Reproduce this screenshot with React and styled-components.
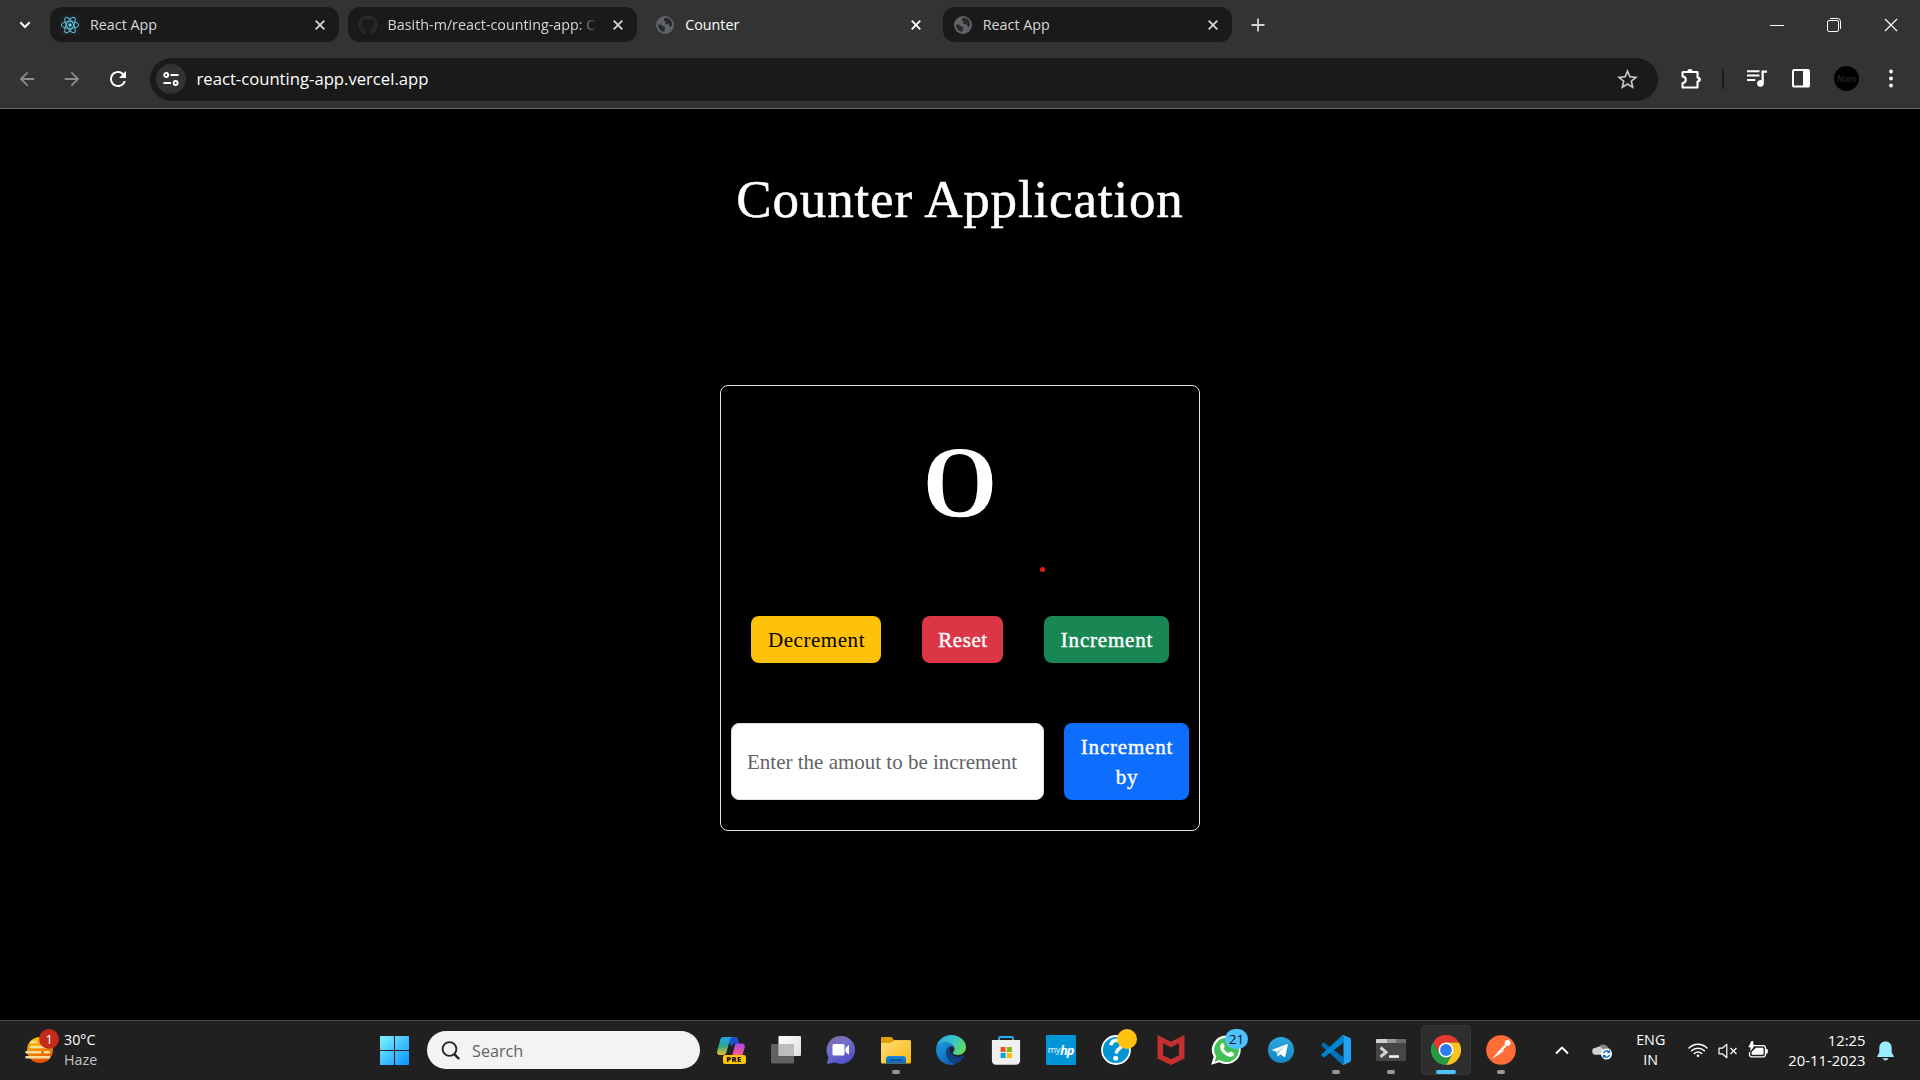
import React from "react";
import styled, { createGlobalStyle, css } from "styled-components";
import { FaGithub } from "react-icons/fa";
import { MdArrowBack, MdArrowForward, MdRefresh, MdStarOutline } from "react-icons/md";

const GlobalStyle = createGlobalStyle`
  * { box-sizing: border-box; }
  html, body { margin: 0; padding: 0; background: #000; }
  body { overflow: hidden; }
  svg { display: block; flex: none; }
`;

const uiFont = `"Segoe UI", "Open Sans", "Noto Sans", sans-serif`;
const pageFont = `Georgia, "Liberation Serif", serif`;

const Screen = styled.div`
  width: 1920px;
  height: 1080px;
  display: flex;
  flex-direction: column;
  background: #000;
  font-family: ${uiFont};
  overflow: hidden;
`;

/* ---------- Browser chrome ---------- */

const Browser = styled.header`
  height: 109px;
  flex: none;
  background: #333;
  border-bottom: 1px solid #6a6a6a;
`;

const TabStrip = styled.div`
  height: 49px;
  display: flex;
  align-items: center;
`;

const TabSearch = styled.div`
  width: 50px;
  display: flex;
  justify-content: center;
`;

const Tabs = styled.div`
  display: flex;
  gap: 8.2px;
`;

const Tab = styled.div`
  width: 289.4px;
  height: 35px;
  padding: 0 14px 0 10px;
  display: flex;
  align-items: center;
  border-radius: 12px;
  background: ${(p) => (p.$active ? "transparent" : "#1a1a1a")};
  color: ${(p) => (p.$active ? "#fff" : "#d6d6d6")};
`;

const TabTitle = styled.span`
  flex: 1;
  margin: 1px 10px 0 10px;
  font-size: 14.3px;
  line-height: 20px;
  white-space: nowrap;
  ${(p) =>
    p.$fade &&
    css`
      mask-image: linear-gradient(to right, #000 88%, transparent 98%);
    `}
`;

const NewTab = styled.div`
  margin-left: 19px;
  width: 15px;
`;

const WindowButtons = styled.div`
  margin-left: auto;
  padding-right: 22px;
  display: flex;
  align-items: center;
  gap: 43px;
`;

const Toolbar = styled.div`
  height: 59px;
  display: flex;
  align-items: center;
  color: #fff;
`;

const NavButtons = styled.div`
  width: 150px;
  padding-left: 16px;
  display: flex;
  align-items: center;
  gap: 23px;
  color: #8b8b8b;
`;

const AddressBar = styled.div`
  width: 1508px;
  height: 43px;
  margin-top: 1px;
  padding: 0 18px 0 6px;
  border-radius: 22px;
  background: #1a1a1a;
  display: flex;
  align-items: center;
`;

const SiteInfo = styled.div`
  width: 30px;
  height: 30px;
  border-radius: 50%;
  background: #333;
  display: grid;
  place-items: center;
`;

const Url = styled.span`
  flex: 1;
  padding-left: 10.5px;
  font-size: 16.66px;
  line-height: 24px;
`;

const ToolbarActions = styled.div`
  flex: 1;
  display: flex;
  align-items: center;
  padding-left: 22px;
`;

const Divider = styled.div`
  width: 2px;
  height: 20px;
  margin: 0 23px 0 20px;
  background: #1a1a1a;
`;

const Avatar = styled.div`
  width: 25px;
  height: 25px;
  margin: 0 30px 0 24px;
  border-radius: 50%;
  background: #000;
  display: grid;
  place-items: center;
  color: #333;
  font: italic 9px ${uiFont};
`;

/* ---------- Page ---------- */

const Page = styled.main`
  height: 911px;
  flex: none;
  display: flex;
  flex-direction: column;
  align-items: center;
  font-family: ${pageFont};
`;

const Title = styled.h1`
  margin: 57px 0 0;
  height: 66px;
  line-height: 66px;
  color: #fff;
  font-size: 53px;
  font-weight: 400;
  letter-spacing: 0.85px;
  -webkit-text-stroke: 0.5px #fff;
`;

const Card = styled.section`
  position: relative;
  width: 480px;
  height: 446px;
  margin-top: 153px;
  border: 1px solid #dee2e6;
  border-radius: 8px;
  display: flex;
  flex-direction: column;
`;

const Count = styled.div`
  height: 230px;
  padding-top: 36px;
  text-align: center;
  color: #fff;
  font-size: 100px;
  line-height: 120px;
  transform: scaleX(1.49);
  -webkit-text-stroke: 1px #fff;
`;

const PointerDot = styled.span`
  position: absolute;
  left: 319px;
  top: 181px;
  width: 5px;
  height: 5px;
  border-radius: 50%;
  background: #f01818;
`;

const Actions = styled.div`
  display: flex;
  gap: 41px;
  padding: 0 30px;
`;

const Button = styled.button`
  width: ${(p) => p.$width}px;
  height: ${(p) => p.$height || 47}px;
  padding: 1px 0 0 1px;
  border: 0;
  border-radius: 8px;
  background: ${(p) => p.$bg};
  color: ${(p) => p.$color || "#fff"};
  font-family: ${pageFont};
  font-size: 21px;
  line-height: 30px;
  letter-spacing: ${(p) => p.$spacing || 0.55}px;
  -webkit-text-stroke: ${(p) => (p.$color ? 0 : 0.4)}px currentColor;
`;

const AmountRow = styled.div`
  margin-top: 60px;
  padding: 0 10px;
  display: flex;
  gap: 20px;
`;

const AmountInput = styled.input`
  width: 313px;
  height: 77px;
  padding: 1px 15px 0;
  border: 1px solid #dee2e6;
  border-radius: 8px;
  background: #fff;
  font-family: ${pageFont};
  font-size: 21px;
  outline: none;
  &::placeholder {
    color: #5f6468;
    opacity: 1;
  }
`;

/* ---------- Taskbar ---------- */

const Taskbar = styled.footer`
  height: 60px;
  flex: none;
  display: flex;
  align-items: stretch;
  background: #202020;
  border-top: 1px solid #4a4a4a;
  color: #fff;
`;

const Weather = styled.div`
  width: 380px;
  display: flex;
  align-items: center;
  padding-left: 25px;
`;

const WeatherIcon = styled.div`
  position: relative;
  width: 30px;
  margin-right: 9px;
`;

const Badge = styled.span`
  position: absolute;
  left: ${(p) => p.$x}px;
  top: ${(p) => p.$y}px;
  min-width: 20px;
  height: 20px;
  width: ${(p) => p.$w || 20}px;
  border-radius: 10px;
  display: grid;
  place-items: center;
  background: ${(p) => p.$bg};
  color: ${(p) => p.$color || "#fff"};
  font-size: 13.5px;
  line-height: 20px;
`;

const TwoLines = styled.div`
  display: flex;
  flex-direction: column;
  margin-top: -2px;
  font-size: ${(p) => p.$size || 14.3}px;
  line-height: 20px;
  text-align: ${(p) => p.$align || "left"};
`;

const Muted = styled.span`
  color: #c4c4c4;
`;

const StartButton = styled.div`
  width: 47px;
  display: flex;
  align-items: center;
`;

const SearchBox = styled.div`
  width: 273px;
  height: 38px;
  margin: 10px 3px 0 0;
  padding: 1px 0 0 14px;
  border-radius: 19px;
  background: #f3f3f3;
  color: #626262;
  display: flex;
  align-items: center;
  gap: 12px;
  font-size: 16.2px;
`;

const Apps = styled.div`
  display: flex;
`;

const AppSlot = styled.div`
  position: relative;
  width: 55px;
  padding: 4px 2.5px 5px;
  display: flex;
`;

const AppFace = styled.div`
  flex: 1;
  display: grid;
  place-items: center;
  border-radius: 5px;
  background: ${(p) => (p.$active ? "#2e2e2e" : "transparent")};
  box-shadow: ${(p) => (p.$active ? "inset 0 0 0 1px #383838" : "none")};
`;

const Indicator = styled.span`
  position: absolute;
  left: 50%;
  bottom: 6px;
  width: ${(p) => (p.$active ? 20 : 8)}px;
  height: 4px;
  border-radius: 2px;
  transform: translateX(-50%);
  background: ${(p) => (p.$active ? "#4cc2ff" : "#9a9a9a")};
`;

const HpTile = styled.div`
  width: 30px;
  height: 30px;
  border-radius: 1px;
  background: #0096d6;
  display: flex;
  align-items: center;
  justify-content: center;
  color: #fff;
  font-size: 9px;
  line-height: 30px;
  letter-spacing: -0.3px;
`;

const HpMark = styled.b`
  font-size: 13px;
  font-style: italic;
  letter-spacing: -1.2px;
`;

const CopilotIcon = styled.div`
  position: relative;
  width: 30px;
  height: 30px;
`;

const PreLabel = styled.span`
  position: absolute;
  left: 7px;
  top: 20px;
  width: 23px;
  height: 9px;
  border-radius: 2px;
  background: #ffc40c;
  color: #111;
  text-align: center;
  font-size: 7.5px;
  font-weight: 800;
  letter-spacing: 0.5px;
  line-height: 9px;
`;

const Tray = styled.div`
  margin-left: auto;
  display: flex;
  align-items: center;
`;

const TrayItem = styled.div`
  margin-left: ${(p) => p.$gap}px;
`;

/* ---------- Icons ---------- */

const Cross = ({ size = 10, width = 1.8, color = "#dcdcdc" }) => (
  <svg width={size} height={size} viewBox="0 0 10 10">
    <path d="M.7.7l8.6 8.6M9.3.7L.7 9.3" stroke={color} strokeWidth={width} />
  </svg>
);

const ReactLogo = () => (
  <svg width="20" height="20" viewBox="0 0 20 20">
    <rect width="20" height="20" rx="1" fill="#20232a" opacity=".7" />
    <g fill="none" stroke="#5cc4dc" strokeWidth="1">
      <ellipse cx="10" cy="10" rx="8.8" ry="3.4" />
      <ellipse cx="10" cy="10" rx="8.8" ry="3.4" transform="rotate(60 10 10)" />
      <ellipse cx="10" cy="10" rx="8.8" ry="3.4" transform="rotate(120 10 10)" />
    </g>
    <circle cx="10" cy="10" r="1.7" fill="#61dafb" />
  </svg>
);

const Globe = () => (
  <svg width="20" height="20" viewBox="0 0 20 20">
    <circle cx="10" cy="10" r="9" fill="#5f6368" />
    <path
      d="M3 9.5c2.500 0 4.200.2 5.200 1.700.5.900 1.900.3 2 1.300.1 1-.7 1.300-.6 2.300.1.800.2 1.500-.5 2C5.500 16.500 3.100 13.500 3 9.500zM9 3.400c.4 1-.3 1.600-.1 2.400.3.900 1.700.2 1.900 1.200.1 1-1 1-.8 1.800.5.700 2.600-.1 3.700.8.900.8.600 2 1.300 2.400.6.200 1.200-.2 1.700-.7C18 7 15.500 3.500 12 3c-.9-.200-2-.1-3 .4z"
      fill="#2b2b2b"
    />
  </svg>
);

const TuneIcon = () => (
  <svg width="16" height="14" viewBox="0 0 16 14" fill="none" stroke="#fff" strokeWidth="1.9">
    <circle cx="3.200" cy="3" r="2" />
    <path d="M7.500 3H15.500M.5 11H8" />
    <circle cx="12.600" cy="11" r="2" />
  </svg>
);

const PuzzleIcon = () => (
  <svg width="22" height="22" viewBox="0 0 22 22">
    <path
      d="M3 4h14.500v5.500a1.900 1.900 0 010 4V19.500H2.500v-4.300c2.300-.4 3.300-1.700 3.300-3.400S4.800 8.800 2.500 8.400V4.500c0-.3.200-.5.500-.5z"
      fill="none"
      stroke="#fff"
      strokeWidth="2.100"
      strokeLinejoin="round"
    />
    <path d="M7.300 3.600a2.700 2.700 0 015.400 0zM18 8.800a2.700 2.700 0 010 5.400z" fill="#fff" />
  </svg>
);

const MediaIcon = () => (
  <svg width="20" height="17" viewBox="0 0 20 17">
    <path d="M0 1.300h12.500M0 5.600h12.500M0 9.900h8.300" stroke="#fff" strokeWidth="2" />
    <path d="M14.500.4H20v2.300h-3.200v10.700a3.400 3.400 0 11-2.300-3.200z" fill="#fff" />
  </svg>
);

const SidePanelIcon = () => (
  <svg width="18" height="19" viewBox="0 0 18 19">
    <rect x="1" y="1" width="16" height="16.600" rx="1.200" fill="none" stroke="#fff" strokeWidth="2" />
    <path d="M11 1h6v16.600h-6z" fill="#fff" />
  </svg>
);

const MenuDots = () => (
  <svg width="4" height="20" viewBox="0 0 4 20" fill="#fff">
    <circle cx="2" cy="2.500" r="1.900" />
    <circle cx="2" cy="9.500" r="1.900" />
    <circle cx="2" cy="16.500" r="1.900" />
  </svg>
);

const HazeIcon = () => (
  <svg width="30" height="28" viewBox="0 0 30 28">
    <defs>
      <linearGradient id="haze" x1="0" y1="0" x2=".3" y2="1">
        <stop offset="0" stopColor="#ffd400" />
        <stop offset="1" stopColor="#e65100" />
      </linearGradient>
    </defs>
    <circle cx="15" cy="13" r="13" fill="url(#haze)" />
    <g stroke="#f5df9a" strokeWidth="2.600" strokeLinecap="round">
      <path d="M6.500 5h4M6 10H27M1.500 15.200H15M20 15.200h4M1.500 20.200H24" />
    </g>
  </svg>
);

const WindowsLogo = () => (
  <svg width="29" height="29" viewBox="0 0 29 29">
    <defs>
      <linearGradient id="win" x1="0" y1="0" x2="1" y2="1">
        <stop offset="0" stopColor="#7df3ff" />
        <stop offset="1" stopColor="#0a93ff" />
      </linearGradient>
    </defs>
    <path
      fill="url(#win)"
      d="M1 0h13v14H0V1a1 1 0 011-1zM15 0h13a1 1 0 011 1v13H15zM0 15h14v14H1a1 1 0 01-1-1zM15 15h14v13a1 1 0 01-1 1H15z"
    />
  </svg>
);

const SearchIcon = () => (
  <svg width="19" height="19" viewBox="0 0 19 19" fill="none" stroke="#262626" strokeLinecap="round">
    <circle cx="8.500" cy="8" r="6.900" strokeWidth="1.900" />
    <path d="M13.500 13.300l4 4" strokeWidth="2.400" />
  </svg>
);

const Copilot = () => (
  <CopilotIcon>
    <svg width="30" height="30" viewBox="0 0 30 30">
      <defs>
        <linearGradient id="copA" x1="0" y1="0" x2="0" y2="1">
          <stop offset="0" stopColor="#1aa5f0" />
          <stop offset=".5" stopColor="#31a58c" />
          <stop offset="1" stopColor="#e5c51f" />
        </linearGradient>
        <linearGradient id="copB" x1="0" y1="0" x2="0" y2="1">
          <stop offset="0" stopColor="#a948e6" />
          <stop offset=".6" stopColor="#f0559b" />
          <stop offset="1" stopColor="#ff9159" />
        </linearGradient>
      </defs>
      <path d="M12 2h7c2 0 2.800 1 3.300 3l1 3.500h-4c-2 0-2.800 1-3.500 3L13 8z" fill="#1f4fd0" />
      <path d="M7.500 2H17c-2 0-2.600 1.500-3.200 3.500L10.500 17c-.6 2.300-1.700 3-3.500 3H4C1.500 20 .6 18 1.300 15.500L4.200 5C4.800 3 5.700 2 7.500 2z" fill="url(#copA)" />
      <path d="M20 8.500h6c2.500 0 3.300 1.700 2.700 4l-2.200 7.500c-.6 2.500-2 4-4 4H13c2 0 2.600-1.500 3.200-3.500l2.400-9c.3-1.800.6-2.500 1.400-3z" fill="url(#copB)" />
    </svg>
    <PreLabel>PRE</PreLabel>
  </CopilotIcon>
);

const TaskView = () => (
  <svg width="30" height="30" viewBox="0 0 30 30">
    <defs>
      <linearGradient id="tv" x1="0" y1="0" x2="1" y2="1">
        <stop offset="0" stopColor="#fff" />
        <stop offset="1" stopColor="#dedede" />
      </linearGradient>
    </defs>
    <rect x="7.500" y="1" width="22.500" height="20" rx="1" fill="url(#tv)" />
    <rect x="0" y="9" width="23" height="19.500" rx="1" fill="#777" opacity=".75" />
    <path d="M7.500 9H23v12H7.500z" fill="#bdbdbd" />
  </svg>
);

const ChatIcon = () => (
  <svg width="30" height="30" viewBox="0 0 30 30">
    <defs>
      <linearGradient id="chat" x1="0" y1="0" x2=".6" y2="1">
        <stop offset="0" stopColor="#8f6a9e" />
        <stop offset=".5" stopColor="#6f6fd0" />
        <stop offset="1" stopColor="#4f50c8" />
      </linearGradient>
    </defs>
    <path d="M15 1a14 14 0 11-6 26.600L.8 29l1.700-7A14 14 0 0115 1z" fill="url(#chat)" />
    <rect x="6.500" y="9" width="12" height="11.500" rx="1.500" fill="#fff" />
    <path d="M19.500 13l3.500-3.200v10L19.500 17z" fill="#fff" />
  </svg>
);

const Explorer = () => (
  <svg width="30" height="30" viewBox="0 0 30 30">
    <defs>
      <linearGradient id="fold" x1="0" y1="0" x2="1" y2="1">
        <stop offset="0" stopColor="#ffdf7a" />
        <stop offset="1" stopColor="#f8b70e" />
      </linearGradient>
      <linearGradient id="foldB" x1="0" y1="0" x2="0" y2="1">
        <stop offset="0" stopColor="#1889dd" />
        <stop offset="1" stopColor="#0f66b8" />
      </linearGradient>
    </defs>
    <path d="M1 2h8.500c1 0 1.500.4 2 1l1.300 2H29v5H0V3a1 1 0 011-1z" fill="#e0a000" />
    <path d="M0 8h8.500c1.500 0 2.200-.7 3-1.300.8-.7 1.400-1.500 3-1.500H29a1 1 0 011 1V27a1.500 1.500 0 01-1.500 1.500h-27A1.500 1.500 0 010 27z" fill="url(#fold)" />
    <path d="M5 28.500V24a3 3 0 013-3h14a3 3 0 013 3v4.500z" fill="url(#foldB)" />
    <path d="M8.500 25h13" stroke="#0a4180" strokeWidth="1.200" />
  </svg>
);

const Edge = () => (
  <svg width="30" height="30" viewBox="0 0 30 30">
    <defs>
      <linearGradient id="edgeA" x1="0" y1=".3" x2="1" y2=".6">
        <stop offset="0" stopColor="#2aa8e8" />
        <stop offset=".55" stopColor="#36c5c8" />
        <stop offset="1" stopColor="#67dd50" />
      </linearGradient>
      <linearGradient id="edgeB" x1="0" y1="0" x2=".4" y2="1">
        <stop offset="0" stopColor="#1b9be0" />
        <stop offset="1" stopColor="#1265b8" />
      </linearGradient>
    </defs>
    <path d="M.3 12.500C1.500 5.300 7.600 0 15 0c8.600 0 15 5.700 15 12.300 0 4.700-3.700 7.700-8 7.700-3.200 0-5.100-.9-5.100-2.200 0-.8 1.600-1.500 1.600-3.700C18.500 10.800 15 8 10.500 7.500 5.800 7.200 2 9 .3 12.500z" fill="url(#edgeA)" />
    <path d="M.2 13C1 9.300 4.500 7.300 8.500 7.300c5.600 0 10 3.100 10 6.500 0-1.500-1.600-2.500-3.300-2.500-3 0-5 3-5 6.200 0 6 4.800 10.500 9.300 11.500C9 32.500-1 24.500.2 13z" fill="url(#edgeB)" />
    <path d="M10.300 17.200c0-3 1.900-5.900 4.800-5.900-2 2-1.500 4.600-.1 6.800 2 3 6 4.500 9.700 3.300 1.200-.4 2.300-1 3-1.200.6-.1.800.4.5.9-2 3.800-5.700 7-9 7.900-4.200-.8-8.900-5.500-8.900-11.800z" fill="#103f86" />
  </svg>
);

const Store = () => (
  <svg width="30" height="30" viewBox="0 0 30 30">
    <path d="M8 7V3.200C8 2.500 8.400 2 9.200 2h11.600c.8 0 1.200.5 1.200 1.200V7" fill="none" stroke="#20b0ef" strokeWidth="1.900" />
    <path d="M1.500 5h27c.3 0 .6.300.6.600V25.500c0 2.500-1.600 4.300-4 4.300H4.900c-2.400 0-4-1.800-4-4.300V5.600c0-.3.300-.6.6-.6z" fill="#f0f0f0" />
    <path d="M9.600 12h5v5h-5z" fill="#f25022" />
    <path d="M15.800 12h5v5h-5z" fill="#7fba00" />
    <path d="M9.600 18h5v5h-5z" fill="#00a4ef" />
    <path d="M15.800 18h5v5h-5z" fill="#ffb900" />
  </svg>
);

const Help = () => (
  <svg width="30" height="30" viewBox="0 0 30 30">
    <circle cx="15" cy="15" r="14" fill="#0096d6" stroke="#fff" strokeWidth="1.800" />
    <path d="M9.800 10.200c.6-3.400 3-5 6-5 3.400 0 5.500 1.800 5.200 4.600-.3 2.700-2.400 3.700-4 4.900-1.100.9-1.500 1.700-1.700 3.800" fill="none" stroke="#fff" strokeWidth="3.600" />
    <circle cx="14.700" cy="23.300" r="2.500" fill="#fff" />
  </svg>
);

const Shield = () => (
  <svg width="28" height="30" viewBox="0 0 28 30">
    <path fillRule="evenodd" fill="#c4302f" d="M.5 0L14 6.700 27.500 0v23.500L14 30 .5 23.500zM6 8.200v12L14 24.200l8-4v-12L14 12.300z" />
  </svg>
);

const WhatsAppIcon = () => (
  <svg width="30" height="30" viewBox="0 0 30 30">
    <path d="M15.500.5a14.300 14.300 0 11-7.200 26.700L.2 29.800l2.500-8A14.300 14.300 0 0115.500.5z" fill="#fff" />
    <path d="M15.500 2.700a12.200 12.200 0 11-6.700 22.300L3.500 26.700l1.700-5.200A12.200 12.200 0 0115.500 2.700z" fill="#43c153" />
    <path d="M10.800 8.300c.5-.5 1.500-.4 1.800.2l1.100 2.600c.3.800-.9 1.800-1.200 2.200 1.200 2.400 2.800 3.800 5.200 4.900.7-.5 1.300-1.900 2.100-1.600l2.700 1.300c.7.4.5 1.800 0 2.500-1 1.400-3.200 1.700-4.800 1.100-4.200-1.400-7-4.200-8.400-8-.5-1.900 0-4 1.500-5.200z" fill="#fff" />
  </svg>
);

const Telegram = () => (
  <svg width="26" height="26" viewBox="0 0 26 26">
    <defs>
      <linearGradient id="tg" x1="0" y1="0" x2="0" y2="1">
        <stop offset="0" stopColor="#2fa9e1" />
        <stop offset="1" stopColor="#1585c4" />
      </linearGradient>
    </defs>
    <circle cx="13" cy="13" r="13" fill="url(#tg)" />
    <path d="M4.800 12.600L18.700 7.200c.8-.3 1.200.1 1 1l-2.300 11c-.2.900-.7 1.100-1.500.6l-3.500-2.600-1.900 1.800c-.5.400-.9.100-1-.3l-1.100-3.900-3.600-1.200c-.8-.3-.8-.7 0-1z" fill="#fff" />
    <path d="M8.700 14.600l8.200-5.100-6.300 6.200-.4 3z" fill="#9ccbe6" />
  </svg>
);

const VsCode = () => (
  <svg width="30" height="30" viewBox="0 0 30 30">
    <path d="M.6 9.200L2 7.900c.5-.4 1-.4 1.500 0L22.500 22.200V30c-.5 0-1-.200-1.400-.6L.6 10.700c-.4-.5-.4-1 0-1.500z" fill="#0070b8" />
    <path d="M.6 20.800L2 22.100c.5.400 1 .4 1.500 0L22.500 7.800V0c-.5 0-1 .2-1.400.6L.6 19.300c-.4.500-.4 1 0 1.500z" fill="#0085d1" />
    <path d="M21 .7c.5-.6 1.200-.8 2-.5l6 2.900c.6.300 1 .9 1 1.500v20.800c0 .6-.4 1.200-1 1.500l-6 2.900c-.8.300-1.500.1-2-.5.900.6 1.500.1 1.500-.8V1.500c0-.9-.6-1.400-1.500-.8z" fill="#22a2f2" />
  </svg>
);

const Terminal = () => (
  <svg width="30" height="24" viewBox="0 0 30 24">
    <rect y="1" width="30" height="22" rx="1" fill="#464646" />
    <path d="M0 5V2a1 1 0 011-1h10v4z" fill="#cfcfcf" />
    <path d="M11 1h9.500v4H11z" fill="#999" />
    <path d="M20.500 1H29a1 1 0 011 1v3h-9.500z" fill="#6e6e6e" />
    <path d="M4.500 9.500l5.500 4.700-5.500 4.700" fill="none" stroke="#d6d6d6" strokeWidth="3" />
    <path d="M13 18.500h10" stroke="#f4f4f4" strokeWidth="2.600" />
  </svg>
);

const Chrome = () => (
  <svg width="30" height="30" viewBox="0 0 30 30">
    <path d="M15 7.500h13A15 15 0 002 7.500l6.500 11.250z" fill="#e33b2e" />
    <path d="M15 7.500h13a15 15 0 01-13 22.500l6.500-11.250z" fill="#fcc31e" />
    <path d="M8.500 18.750L2 7.500A15 15 0 0015 30l6.500-11.250z" fill="#259b44" />
    <circle cx="15" cy="15" r="7.500" fill="#fff" />
    <circle cx="15" cy="15" r="5.900" fill="#2a7cf0" />
  </svg>
);

const Postman = () => (
  <svg width="30" height="30" viewBox="0 0 30 30">
    <circle cx="15" cy="15" r="14.800" fill="#ff6c37" />
    <circle cx="21.600" cy="8" r="2.900" fill="#fff" />
    <path d="M18.700 9.800l1.700 1.800-8.300 7.900-1.400-1.600z" fill="#fff" />
    <path d="M12.500 17L7 22.800l5.500-3.300 5.300-4z" fill="#fff" stroke="#fff" strokeWidth=".6" />
  </svg>
);

const CloudSync = () => (
  <svg width="20" height="18" viewBox="0 0 20 18">
    <path d="M6 6a5.500 5.500 0 0110.300 0 3.500 3.500 0 01.7 6.800H8z" fill="#858585" />
    <path d="M3.500 12.800A3.500 3.500 0 014 5.800 5 5 0 0111.500 8l2 4.800z" fill="#d0d0d0" />
    <circle cx="14.500" cy="12" r="5.500" fill="#fff" />
    <path d="M11.400 11.400a3.200 3.200 0 015.800-1.200M17.600 12.600a3.200 3.200 0 01-5.800 1.200M17.500 8.200v2.200h-2.200M11.500 15.800v-2.200h2.200" fill="none" stroke="#1671c4" strokeWidth="1.300" />
  </svg>
);

const Wifi = () => (
  <svg width="20" height="18" viewBox="0 0 20 18" fill="none" stroke="#fff" strokeWidth="1.500" strokeLinecap="round">
    <path d="M1 6a12.700 12.700 0 0118 0M3.600 8.800a9 9 0 0112.800 0M6.300 11.500a5.300 5.300 0 017.400 0" />
    <circle cx="10" cy="13.800" r="1.300" fill="#fff" stroke="none" />
  </svg>
);

const Muffled = () => (
  <svg width="20" height="16" viewBox="0 0 20 16" fill="none" stroke="#fff" strokeWidth="1.200">
    <path d="M1 5.200h3.300L8.800 1.300v13.400L4.300 10.800H1z" strokeLinejoin="round" />
    <path d="M12.500 5l6 6M18.500 5l-6 6" />
  </svg>
);

const Battery = () => (
  <svg width="20" height="20" viewBox="0 0 20 20">
    <path d="M6.500 4.600H15a2.500 2.500 0 012.500 2.500v6.300a2.500 2.500 0 01-2.500 2.500H4a2.500 2.500 0 01-2.500-2.500V11" fill="none" stroke="#fff" strokeWidth="1.300" />
    <path d="M8 6.700h6.500c.7 0 1 .4 1 1v5c0 .7-.3 1.100-1 1.100H4.600c-.7 0-1-.4-1-1.100V11z" fill="#fff" />
    <path d="M18 8h1a.8.800 0 01.8.8v2.900a.8.800 0 01-.8.800h-1z" fill="#fff" />
    <path d="M3.500 0h1.700v3.700h2L2.500 10.500V6.300H.3z" fill="#fff" />
  </svg>
);

const Bell = () => (
  <svg width="17" height="20" viewBox="0 0 17 20">
    <path d="M8.500.5c3.700 0 6.200 2.700 6.200 6.300v4.700l2 3.500c.2.500-.1 1-.6 1H.9c-.5 0-.8-.5-.6-1l2-3.500V6.800C2.300 3.200 4.800.5 8.500.5zM5.700 17.200h5.600c-.3 1.300-1.400 2.200-2.800 2.200s-2.500-.9-2.800-2.200z" fill="#99ebff" />
  </svg>
);

/* ---------- Data ---------- */

const tabs = [
  { title: "React App", icon: <ReactLogo /> },
  { title: "Basith-m/react-counting-app: C", icon: <FaGithub size={20} color="#24292f" />, fade: true },
  { title: "Counter", icon: <Globe />, active: true },
  { title: "React App", icon: <Globe /> },
];

const apps = [
  { id: "copilot", icon: <Copilot /> },
  { id: "taskview", icon: <TaskView /> },
  { id: "chat", icon: <ChatIcon /> },
  { id: "explorer", icon: <Explorer />, open: true },
  { id: "edge", icon: <Edge /> },
  { id: "store", icon: <Store /> },
  { id: "hp", icon: <HpTile>my<HpMark>hp</HpMark></HpTile> },
  { id: "help", icon: <Help />, badge: <Badge $x={28.500} $y={8} $bg="#ffc20e" /> },
  { id: "shield", icon: <Shield /> },
  { id: "whatsapp", icon: <WhatsAppIcon />, badge: <Badge $x={27} $y={8} $w={23} $bg="#4cc2ff" $color="#111">21</Badge> },
  { id: "telegram", icon: <Telegram /> },
  { id: "code", icon: <VsCode />, open: true },
  { id: "terminal", icon: <Terminal />, open: true },
  { id: "chrome", icon: <Chrome />, open: true, active: true },
  { id: "postman", icon: <Postman />, open: true },
];

export default function App() {
  return (
    <Screen>
      <GlobalStyle />
      <Browser>
        <TabStrip>
          <TabSearch>
            <svg width="12" height="8" viewBox="0 0 12 8">
              <path d="M1.300 1.300L6 6l4.700-4.700" fill="none" stroke="#fff" strokeWidth="2.100" />
            </svg>
          </TabSearch>
          <Tabs>
            {tabs.map((tab, i) => (
              <Tab key={i} $active={tab.active}>
                {tab.icon}
                <TabTitle $fade={tab.fade}>{tab.title}</TabTitle>
                <Cross color={tab.active ? "#fff" : "#d6d6d6"} />
              </Tab>
            ))}
          </Tabs>
          <NewTab>
            <svg width="14" height="14" viewBox="0 0 14 14">
              <path d="M7 .5v13M.5 7h13" stroke="#d6d6d6" strokeWidth="1.800" />
            </svg>
          </NewTab>
          <WindowButtons>
            <svg width="14" height="14" viewBox="0 0 14 14">
              <path d="M0 7.500h14" stroke="#fff" />
            </svg>
            <svg width="14" height="14" viewBox="0 0 14 14" fill="none" stroke="#fff">
              <rect x=".5" y="2.500" width="11" height="11" rx="1.500" />
              <path d="M3 .5h7.500a3 3 0 013 3V11" />
            </svg>
            <Cross size={14} width={0.8} color="#fff" />
          </WindowButtons>
        </TabStrip>
        <Toolbar>
          <NavButtons>
            <MdArrowBack size={22} />
            <MdArrowForward size={22} />
            <MdRefresh size={24} color="#fff" />
          </NavButtons>
          <AddressBar>
            <SiteInfo>
              <TuneIcon />
            </SiteInfo>
            <Url>react-counting-app.vercel.app</Url>
            <MdStarOutline size={25} color="#c7c7c7" />
          </AddressBar>
          <ToolbarActions>
            <PuzzleIcon />
            <Divider />
            <MediaIcon />
            <TrayItem $gap={25}>
              <SidePanelIcon />
            </TrayItem>
            <Avatar>Nom</Avatar>
            <MenuDots />
          </ToolbarActions>
        </Toolbar>
      </Browser>

      <Page>
        <Title>Counter Application</Title>
        <Card>
          <Count>0</Count>
          <PointerDot />
          <Actions>
            <Button $width={130} $bg="#ffc107" $color="#000">Decrement</Button>
            <Button $width={81} $bg="#dc3545">Reset</Button>
            <Button $width={125} $bg="#198754" $spacing={0.8}>Increment</Button>
          </Actions>
          <AmountRow>
            <AmountInput placeholder="Enter the amout to be increment" />
            <Button $width={125} $height={77} $bg="#0d6efd" $spacing={0.8}>
              Increment
              <br />
              by
            </Button>
          </AmountRow>
        </Card>
      </Page>

      <Taskbar>
        <Weather>
          <WeatherIcon>
            <HazeIcon />
            <Badge $x={14} $y={-8} $bg="#c42b1c">1</Badge>
          </WeatherIcon>
          <TwoLines>
            <span>30°C</span>
            <Muted>Haze</Muted>
          </TwoLines>
        </Weather>
        <StartButton>
          <WindowsLogo />
        </StartButton>
        <SearchBox>
          <SearchIcon />
          Search
        </SearchBox>
        <Apps>
          {apps.map((app) => (
            <AppSlot key={app.id}>
              <AppFace $active={app.active}>{app.icon}</AppFace>
              {app.badge}
              {app.open && <Indicator $active={app.active} />}
            </AppSlot>
          ))}
        </Apps>
        <Tray>
          <svg width="14" height="9" viewBox="0 0 14 9">
            <path d="M1 7.500l6-6 6 6" fill="none" stroke="#fff" strokeWidth="1.900" />
          </svg>
          <TrayItem $gap={23}>
            <CloudSync />
          </TrayItem>
          <TrayItem $gap={24}>
            <TwoLines $align="center">
              <span>ENG</span>
              <span>IN</span>
            </TwoLines>
          </TrayItem>
          <TrayItem $gap={23}>
            <Wifi />
          </TrayItem>
          <TrayItem $gap={10}>
            <Muffled />
          </TrayItem>
          <TrayItem $gap={10}>
            <Battery />
          </TrayItem>
          <TrayItem $gap={20}>
            <TwoLines $align="right" $size={14.8}>
              <span>12:25</span>
              <span>20-11-2023</span>
            </TwoLines>
          </TrayItem>
          <TrayItem $gap={11}>
            <Bell />
          </TrayItem>
          <TrayItem $gap={26.5} />
        </Tray>
      </Taskbar>
    </Screen>
  );
}
